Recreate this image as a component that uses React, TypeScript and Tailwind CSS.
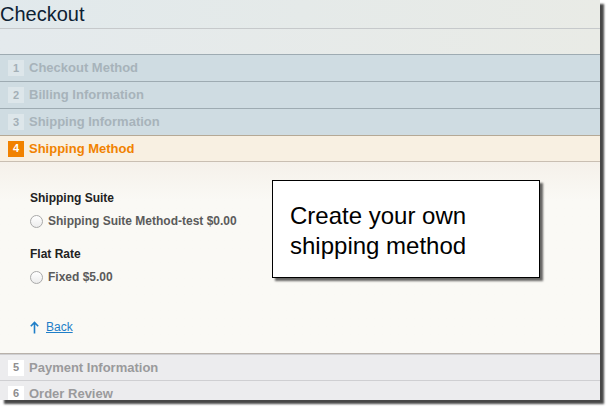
const font = { fontFamily: '"Liberation Sans", Arial, sans-serif' };

const Step = ({ n, label, tone }: { n: number; label: string; tone: "done" | "todo" }) => {
  const done = tone === "done";
  return (
    <div
      className={
        done
          ? "flex h-[27px] items-center border-t border-[#9eabb2] bg-[#cfdce2] pl-2"
          : "flex h-[26px] items-center border-t border-[#cfcfd2] bg-[#ececee] pl-2"
      }
    >
      <span
        className={
          done
            ? "flex h-[16px] w-[16px] items-center justify-center bg-[#dde6ea] text-[11px] font-bold text-[#a3afb6]"
            : "flex h-[16px] w-[16px] items-center justify-center bg-white text-[11px] font-bold text-[#8e8e90]"
        }
      >
        {n}
      </span>
      <span className={done ? "ml-[5px] text-[13px] font-bold text-[#a7b3ba]" : "ml-[5px] text-[13px] font-bold text-[#9a9a9c]"}>
        {label}
      </span>
    </div>
  );
};

const Radio = ({ label }: { label: string }) => (
  <label className="flex items-center gap-[5px]">
    <span className="h-[13px] w-[13px] rounded-full border border-[#a9a9a9] bg-gradient-to-b from-white to-[#ececec]" />
    <span className="text-[12px] font-bold text-[#5b5b5b]">{label}</span>
  </label>
);

export default function App() {
  return (
    <div className="h-[410px] w-[610px] bg-white" style={font}>
      <div className="relative h-[400px] w-[600px] overflow-hidden shadow-[4px_4px_2px_rgba(0,0,0,0.72)]">
        <div className="h-[29px] border-b border-[#c6c9cb] bg-gradient-to-r from-[#e1e9ec] to-[#e9ebe6]">
          <h1 className="text-[20px] leading-[28px] text-[#0d2133]">Checkout</h1>
        </div>
        <div className="h-[25px] bg-gradient-to-r from-[#e4eaed] to-[#e9ebe6]" />
        <Step n={1} label="Checkout Method" tone="done" />
        <Step n={2} label="Billing Information" tone="done" />
        <Step n={3} label="Shipping Information" tone="done" />
        <div className="flex h-[26px] items-center border-t border-[#b5a996] bg-[#f8f0e2] pl-2">
          <span className="flex h-[16px] w-[16px] items-center justify-center bg-[#f18200] text-[11px] font-bold text-white">
            4
          </span>
          <span className="ml-[5px] text-[13px] font-bold text-[#f18200]">Shipping Method</span>
        </div>
        <div className="h-[192px] border-t border-[#c9bfb2] bg-gradient-to-b from-[#f5f1ea] to-[#faf9f5] to-[20%] pl-[30px] pt-[27px]">
          <div className="text-[12px] font-bold text-[#222]">Shipping Suite</div>
          <div className="mt-[5px]">
            <Radio label="Shipping Suite Method-test $0.00" />
          </div>
          <div className="mt-[15px] text-[12px] font-bold text-[#222]">Flat Rate</div>
          <div className="mt-[5px]">
            <Radio label="Fixed $5.00" />
          </div>
          <a className="mt-[32px] flex items-center gap-[7px] text-[12px] text-[#1e7ec8]">
            <svg width="9" height="13" viewBox="0 0 9 13" fill="none" stroke="#1e7ec8" strokeWidth="1.6">
              <path d="M4.5 12.5V1.5M0.8 5.2L4.5 1.5L8.2 5.2" />
            </svg>
            <span className="underline">Back</span>
          </a>
        </div>
        <div className="border-t border-[#b8b1aa]">
          <Step n={5} label="Payment Information" tone="todo" />
        </div>
        <Step n={6} label="Order Review" tone="todo" />

        <div className="absolute left-[272px] top-[180px] flex h-[98px] w-[268px] items-center border border-black bg-white pl-[17px] pt-[4px] shadow-[3px_3px_2px_rgba(0,0,0,0.6)]">
          <p className="text-[24px] leading-[30px] text-black">
            Create your own
            <br />
            shipping method
          </p>
        </div>
      </div>
    </div>
  );
}
